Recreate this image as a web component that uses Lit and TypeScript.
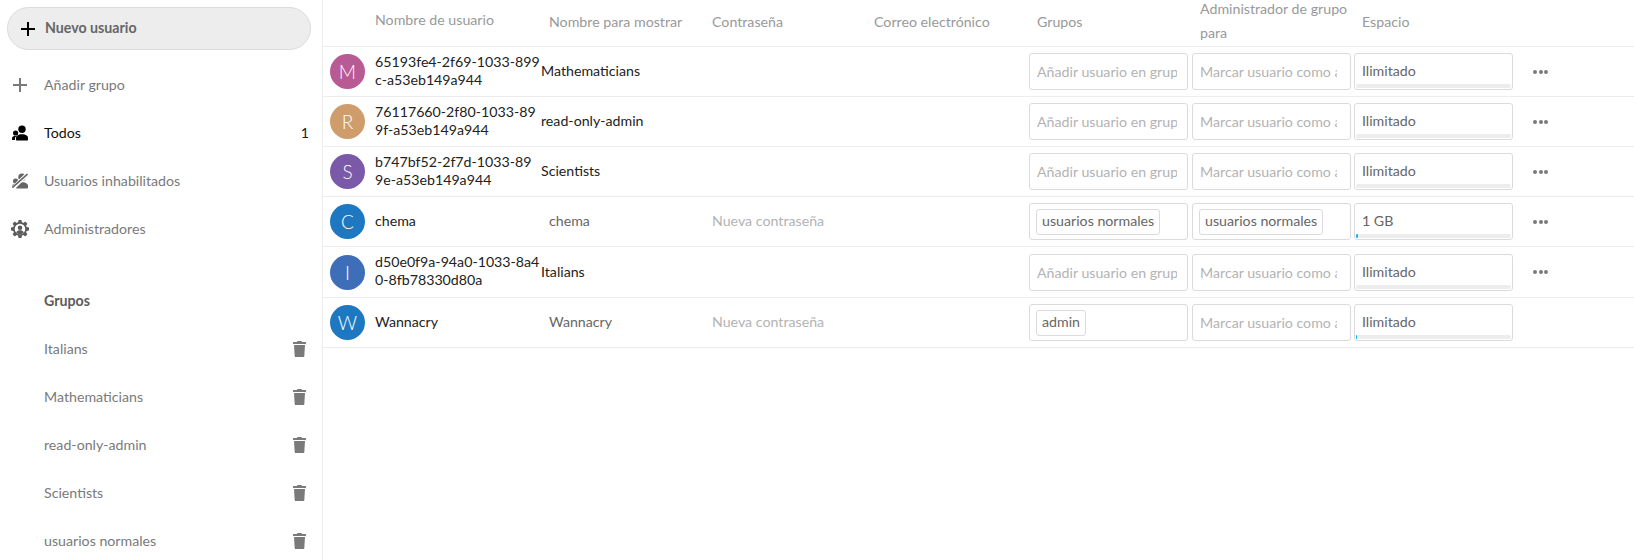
import { LitElement, css, html, svg } from "lit";
import { customElement } from "lit/decorators.js";

const plusIcon = (color: string) => html`<svg width="16" height="16" viewBox="0 0 16 16"><path fill=${color} d="M7 1h2v6h6v2H9v6H7V9H1V7h6z"/></svg>`;

const people = svg`
  <circle cx="10" cy="4.300" r="3.700"/>
  <path d="M5 15.500c-.6 0-1-.4-1-1v-1.800c0-1.400 1-2.200 2.300-2.700l1.700-.8h4l1.700.8c1.300.5 2.300 1.300 2.300 2.700v1.800c0 .6-.4 1-1 1z"/>
  <circle cx="3.600" cy="8" r="2.600"/>
  <path d="M.6 15c-.4 0-.6-.3-.6-.6v-1c0-1 .7-1.700 1.600-2.100l.9-.4h2.200c-1 .6-1.700 1.400-1.700 2.700V15z"/>
`;

const usersIcon = html`<svg width="16" height="16" viewBox="0 0 16 16" fill="#000">${people}</svg>`;

const disabledIcon = html`<svg width="16" height="16" viewBox="0 0 16 16" fill="#666">
  ${people}
  <path d="M16 0.500L1 15" stroke="#fff" stroke-width="4"/>
  <path d="M15.500 1L.5 14.500" stroke="#666" stroke-width="1.600"/>
</svg>`;

const adminIcon = html`<svg class="big" width="18" height="18" viewBox="0 0 16 16">
  <path fill="#5c5c5c" d="M6.700 0h2.600l.4 2.100c.4.100.8.300 1.200.5l1.800-1.200 1.900 1.900-1.200 1.800c.2.400.4.800.5 1.200l2.100.4v2.600l-2.100.4c-.1.400-.3.800-.5 1.200l1.200 1.800-1.900 1.900-1.800-1.200c-.4.200-.8.400-1.200.5L9.300 16H6.700l-.4-2.100c-.4-.1-.8-.3-1.200-.5l-1.800 1.200-1.900-1.900 1.200-1.800c-.2-.4-.4-.8-.5-1.200L0 9.300V6.700l2.100-.4c.1-.4.300-.8.500-1.200L1.400 3.300l1.900-1.900 1.800 1.200c.4-.2.800-.4 1.200-.5z"/>
  <circle cx="8" cy="8" r="4.700" fill="#fff"/>
  <circle cx="8" cy="6.800" r="2" fill="#5c5c5c"/>
  <path fill="#5c5c5c" d="M4.600 11.200c.5-1.500 2-2 3.400-2s2.900.5 3.400 2c-.9.9-2.100 1.500-3.400 1.500s-2.500-.6-3.400-1.500z"/>
</svg>`;

const trashIcon = html`<svg width="13" height="16" viewBox="0 0 13 16"><path fill="#7a7a7a" d="M4.500 0h4l.5 1h3.500c.3 0 .5.200.5.500V3H0V1.500c0-.3.200-.5.500-.5H4zM1 4h11l-.7 11c0 .6-.5 1-1 1H2.700c-.5 0-1-.4-1-1z"/></svg>`;

interface User {
  initial: string;
  color: string;
  id: string;
  display: string;
  editable: boolean;
  groups: string | null;
  subadmin: string | null;
  quota: string;
  used: number;
  actions: boolean;
}

const USERS: User[] = [
  { initial: "M", color: "#b85a93", id: "65193fe4-2f69-1033-899\nc-a53eb149a944", display: "Mathematicians", editable: false, groups: null, subadmin: null, quota: "Ilimitado", used: 0, actions: true },
  { initial: "R", color: "#cf9d6c", id: "76117660-2f80-1033-89\n9f-a53eb149a944", display: "read-only-admin", editable: false, groups: null, subadmin: null, quota: "Ilimitado", used: 0, actions: true },
  { initial: "S", color: "#7a5aa8", id: "b747bf52-2f7d-1033-89\n9e-a53eb149a944", display: "Scientists", editable: false, groups: null, subadmin: null, quota: "Ilimitado", used: 0, actions: true },
  { initial: "C", color: "#1d78c1", id: "chema", display: "chema", editable: true, groups: "usuarios normales", subadmin: "usuarios normales", quota: "1 GB", used: 2, actions: true },
  { initial: "I", color: "#3f6eb8", id: "d50e0f9a-94a0-1033-8a4\n0-8fb78330d80a", display: "Italians", editable: false, groups: null, subadmin: null, quota: "Ilimitado", used: 0, actions: true },
  { initial: "W", color: "#1d78c1", id: "Wannacry", display: "Wannacry", editable: true, groups: "admin", subadmin: null, quota: "Ilimitado", used: 1, actions: false },
];

const GROUPS = ["Italians", "Mathematicians", "read-only-admin", "Scientists", "usuarios normales"];

@customElement("app-root")
export class AppRoot extends LitElement {
  static styles = css`
    :host {
      display: flex;
      height: 560px;
      overflow: hidden;
      background: #fff;
      font-family: "Lato", sans-serif;
      font-size: 14.2px;
      color: #222;
    }
    .nav {
      flex: none;
      box-sizing: border-box;
      border-right: 1px solid #ededed;
      width: 323px;
      padding-top: 7px;
    }
    .new-user {
      display: flex;
      align-items: center;
      gap: 9px;
      box-sizing: border-box;
      height: 43px;
      margin: 0 11px 0 7px;
      padding-left: 12px;
      background: #ededed;
      border: 1px solid #dbdbdb;
      border-radius: 22px;
      font-weight: 700;
      color: #666;
    }
    .new-user span {
      padding-bottom: 2px;
    }
    .items {
      margin-top: 11px;
    }
    .item {
      display: flex;
      align-items: center;
      height: 48px;
      padding: 0 13px 0 12px;
      color: #7a7a7a;
    }
    .item svg {
      flex: none;
    }
    .item svg.big {
      margin: 0 -1px;
    }
    .item .label {
      flex: 1;
      margin-left: 16px;
      padding-bottom: 2px;
    }
    .item.active {
      color: #111;
    }
    .item.head {
      font-weight: 700;
      color: #5c5c5c;
    }
    .item.group {
      padding-right: 16px;
    }
    .item .label.plain {
      margin-left: 32px;
    }
    .spacer {
      height: 24px;
    }
    .count {
      color: #222;
      padding-bottom: 2px;
    }
    .list {
      flex: 1;
      min-width: 0;
    }
    .row {
      display: grid;
      grid-template-columns: 7px 35px 10px 166px 163px 162px 163px 163px 162px 162px 1fr;
      align-items: center;
      box-sizing: border-box;
      height: 50px;
      border-bottom: 1px solid #ededed;
    }
    .row.tall {
      height: 51px;
    }
    .row.header {
      height: 47px;
      grid-template-rows: 42px;
      padding-bottom: 4px;
      color: #999;
    }
    .avatar {
      grid-column: 2;
      width: 35px;
      height: 35px;
      border-radius: 50%;
      display: flex;
      align-items: center;
      justify-content: center;
      color: #fff;
      font-size: 19px;
      font-weight: 300;
    }
    .name {
      grid-column: 4;
      line-height: 18px;
      white-space: pre-line;
      padding-bottom: 2px;
    }
    .cell {
      padding-bottom: 2px;
    }
    .pad {
      padding-left: 8px;
    }
    .two-line {
      line-height: 24px;
    }
    .display-edit {
      color: #666;
    }
    .placeholder {
      color: #b3b3b3;
    }
    .box {
      box-sizing: border-box;
      width: 159px;
      height: 37px;
      border: 1px solid #dbdbdb;
      border-radius: 3px;
      display: flex;
      align-items: center;
      padding-left: 7px;
      color: #666;
      overflow: hidden;
      white-space: nowrap;
      position: relative;
    }
    .box .placeholder {
      overflow: hidden;
      margin-right: 10px;
    }
    .box .placeholder.wide {
      margin-right: 13px;
    }
    .box.tags {
      padding-left: 6px;
    }
    .box.quota {
      padding-bottom: 2px;
    }
    .tag {
      box-sizing: border-box;
      height: 26px;
      display: flex;
      align-items: center;
      padding: 0 5px 2px;
      border: 1px solid #dbdbdb;
      border-radius: 3px;
    }
    .bar {
      position: absolute;
      left: 1px;
      right: 1px;
      bottom: 1px;
      height: 4px;
      background: #ededed;
      border-radius: 2px;
    }
    .fill {
      height: 100%;
      background: #1ab4e6;
      border-radius: 2px;
    }
    .dots {
      display: flex;
      gap: 1.500px;
      padding-left: 17px;
    }
    .dots i {
      width: 4px;
      height: 4px;
      border-radius: 50%;
      background: #7a7a7a;
    }
  `;

  private renderRow(u: User, i: number) {
    return html`<div class="row ${i === 4 ? "tall" : ""}">
      <div class="avatar" style="background:${u.color}">${u.initial}</div>
      <div class="name">${u.id}</div>
      <div class="cell ${u.editable ? "pad display-edit" : ""}">${u.display}</div>
      <div class="cell pad placeholder">${u.editable ? "Nueva contraseña" : ""}</div>
      <div></div>
      ${u.groups
        ? html`<div class="box tags"><span class="tag">${u.groups}</span></div>`
        : html`<div class="box"><span class="placeholder">Añadir usuario en grupo</span></div>`}
      ${u.subadmin
        ? html`<div class="box tags"><span class="tag">${u.subadmin}</span></div>`
        : html`<div class="box"><span class="placeholder wide">Marcar usuario como admin</span></div>`}
      <div class="box quota">
        ${u.quota}
        <div class="bar">${u.used ? html`<div class="fill" style="width:${u.used}px"></div>` : ""}</div>
      </div>
      ${u.actions ? html`<div class="dots"><i></i><i></i><i></i></div>` : html`<div></div>`}
    </div>`;
  }

  render() {
    return html`
      <nav class="nav">
        <div class="new-user">${plusIcon("#000")}<span>Nuevo usuario</span></div>
        <div class="items">
          <div class="item">${plusIcon("#7a7a7a")}<span class="label">Añadir grupo</span></div>
          <div class="item active">${usersIcon}<span class="label">Todos</span><span class="count">1</span></div>
          <div class="item">${disabledIcon}<span class="label">Usuarios inhabilitados</span></div>
          <div class="item">${adminIcon}<span class="label">Administradores</span></div>
          <div class="spacer"></div>
          <div class="item head"><span class="label plain">Grupos</span></div>
          ${GROUPS.map((g) => html`<div class="item group"><span class="label plain">${g}</span>${trashIcon}</div>`)}
        </div>
      </nav>
      <main class="list">
        <div class="row header">
          <div class="name">Nombre de usuario</div>
          <div class="pad">Nombre para mostrar</div>
          <div class="pad">Contraseña</div>
          <div class="pad">Correo electrónico</div>
          <div class="pad">Grupos</div>
          <div class="pad two-line">Administrador de grupo para</div>
          <div class="pad">Espacio</div>
          <div></div>
        </div>
        ${USERS.map((u, i) => this.renderRow(u, i))}
      </main>
    `;
  }
}
